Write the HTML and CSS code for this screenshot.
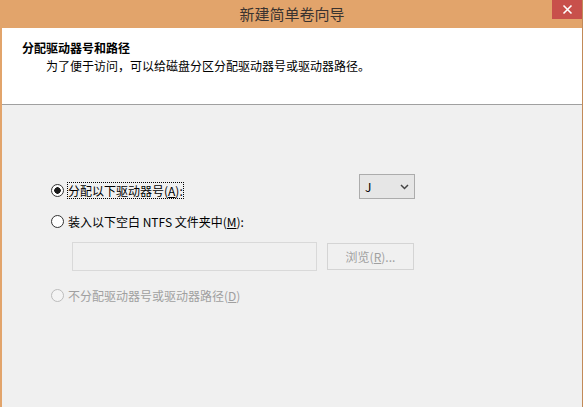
FILE: index.html
```html
<!DOCTYPE html>
<html lang="zh-CN">
<head>
    <meta charset="UTF-8">
    <title>新建简单卷向导</title>
    <link rel="stylesheet" href="styles.css">
</head>
<body>
    <div class="window">
        <div class="titlebar">
            <span></span>
            <div class="title">新建简单卷向导</div>
            <div class="close">
                <svg width="11" height="11" viewBox="0 0 11 11">
                    <path d="M1.5 1.5 L9.5 9.5 M9.5 1.5 L1.5 9.5" stroke="#fff" stroke-width="1.6"/>
                </svg>
            </div>
        </div>

        <div class="header">
            <div class="heading">分配驱动器号和路径</div>
            <div class="subtitle">为了便于访问，可以给磁盘分区分配驱动器号或驱动器路径。</div>
        </div>

        <div class="content">
            <div class="options">
                <div class="row row-first">
                    <label class="option">
                        <input type="radio" name="mode" checked>
                        <span class="focus">分配以下驱动器号(<u>A</u>):</span>
                    </label>
                    <div class="dropdown">
                        <span>J</span>
                        <svg width="9" height="6" viewBox="0 0 9 6">
                            <path d="M1 1 L4.5 4.5 L8 1" fill="none" stroke="#444" stroke-width="1.5"/>
                        </svg>
                    </div>
                </div>

                <div class="row row-second">
                    <label class="option">
                        <input type="radio" name="mode">
                        <span class="text">装入以下空白 NTFS 文件夹中(<u>M</u>):</span>
                    </label>
                </div>

                <div class="row row-path">
                    <div class="path-box"></div>
                    <div class="browse">浏览(<u>R</u>)...</div>
                </div>

                <div class="row row-none">
                    <label class="option disabled">
                        <input type="radio" name="mode" disabled>
                        <span class="text">不分配驱动器号或驱动器路径(<u>D</u>)</span>
                    </label>
                </div>
            </div>
        </div>
    </div>
</body>
</html>
```

FILE: styles.css
```css
body {
    margin: 0;
    font-family: "Noto Sans CJK SC", "Noto Sans", sans-serif;
    font-size: 12px;
    color: #000;
}

.window {
    height: 407px;
    display: flex;
    flex-direction: column;
    border-left: 2px solid #e2a46b;
    border-right: 1px solid #c28a58;
    background-color: #f0f0f0;
    overflow: hidden;
}

.titlebar {
    height: 28px;
    flex-shrink: 0;
    display: grid;
    grid-template-columns: 1fr auto 1fr;
    background-color: #e2a46b;
}

.title {
    line-height: 28px;
    font-size: 15px;
    color: #3a3330;
}

.close {
    justify-self: end;
    width: 30px;
    height: 19px;
    display: flex;
    justify-content: center;
    align-items: center;
    background-color: #c8504b;
}

.header {
    height: 77px;
    flex-shrink: 0;
    box-sizing: border-box;
    padding: 12px 0 0 20px;
    background-color: #fff;
    border-bottom: 1px solid #a0a0a0;
    line-height: 16px;
}

.heading {
    font-weight: bold;
}

.subtitle {
    margin-top: 2px;
    padding-left: 24px;
}

.content {
    flex: 1;
    padding-left: 49px;
}

.options {
    width: 364px;
    padding-top: 69px;
}

.row {
    display: flex;
}

.row-first {
    height: 25px;
    justify-content: space-between;
    align-items: flex-end;
}

.row-second {
    margin-top: 14px;
}

.row-path {
    margin-top: 12px;
    padding-left: 21px;
    gap: 10px;
    align-items: center;
}

.row-none {
    margin-top: 16px;
}

.option {
    display: flex;
    align-items: center;
    height: 17px;
    line-height: 17px;
    white-space: nowrap;
}

.option input {
    appearance: none;
    margin: 0 3px 0 0;
    width: 13px;
    height: 13px;
    box-sizing: border-box;
    border: 1px solid #333;
    border-radius: 50%;
    background-color: #fff;
}

.option input:checked {
    background: radial-gradient(circle, #1a1a1a 0 3px, #fff 3.5px);
}

.option.disabled {
    color: #a0a0a0;
}

.option.disabled input {
    border-color: #bcbcbc;
    background-color: #f4f4f4;
}

.focus {
    padding: 0 1px;
    outline: 1px dotted #000;
    outline-offset: -1px;
}

.text {
    padding-left: 1px;
}

.dropdown {
    width: 56px;
    height: 25px;
    box-sizing: border-box;
    display: flex;
    justify-content: space-between;
    align-items: center;
    padding: 0 5px 0 5px;
    border: 1px solid #acacac;
    background-color: #e6e6e6;
    font-size: 12px;
}

.path-box {
    width: 245px;
    height: 29px;
    box-sizing: border-box;
    border: 1px solid #d9d9d9;
    background-color: #f0f0f0;
}

.browse {
    width: 87px;
    height: 27px;
    box-sizing: border-box;
    border: 1px solid #d4d4d4;
    background-color: #f0f0f0;
    color: #a0a0a0;
    text-align: center;
    line-height: 25px;
}
```
